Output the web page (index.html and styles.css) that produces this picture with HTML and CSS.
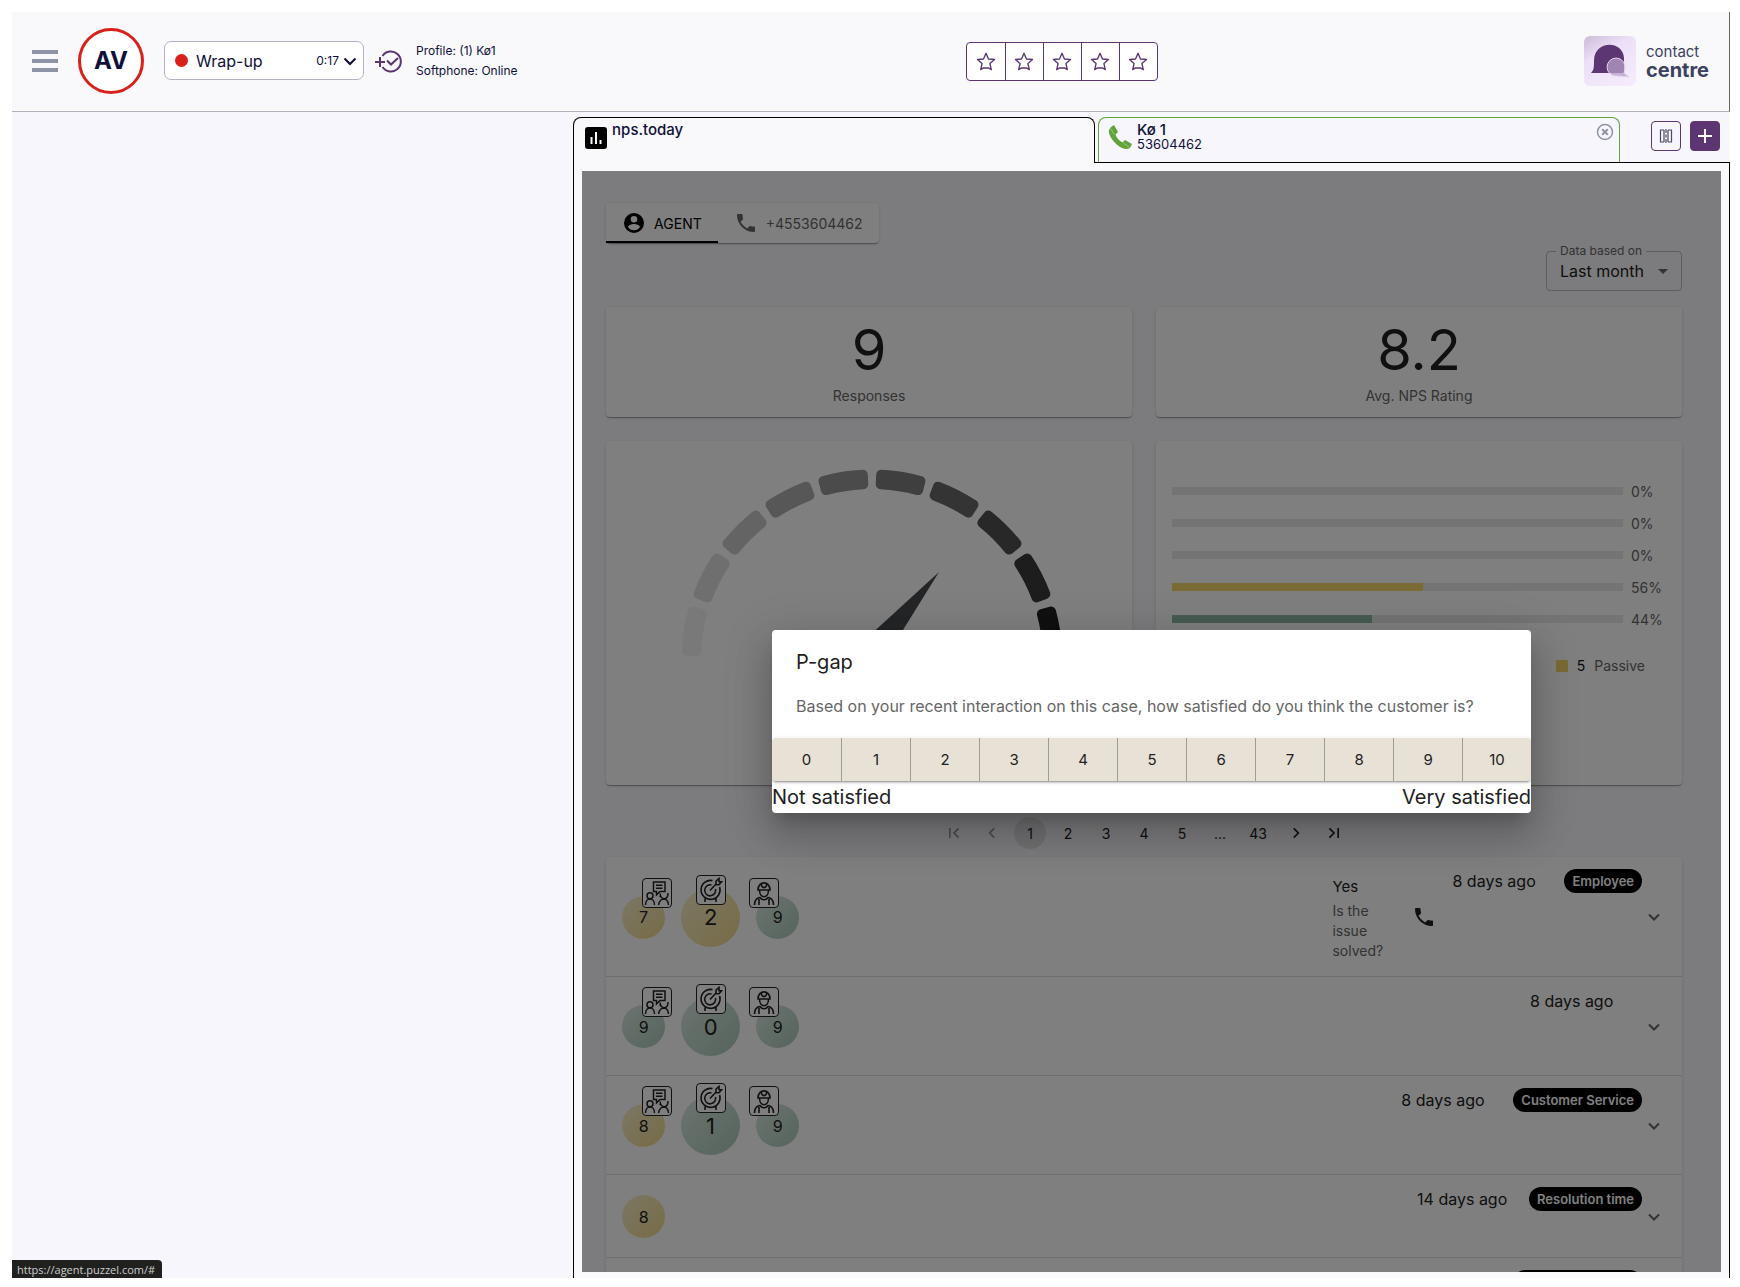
FILE: index.html
```html
<!DOCTYPE html>
<html lang="en">
<head>
<meta charset="utf-8">
<title>Contact Centre</title>
<link rel="stylesheet" href="styles.css">
</head>
<body>
<svg class="defs" aria-hidden="true">
  <symbol id="star" viewBox="0 0 24 24"><path d="M12 2.500l2.700 6.200 6.600.600-5 4.400 1.500 6.600-3-1.800h-5.600l-3 1.800 1.500-6.600-5-4.400 6.600-.600z" fill="none" stroke="currentColor" stroke-width="1.500" stroke-linejoin="round"/></symbol>
  <symbol id="phone" viewBox="0 0 24 24"><path d="M6.600 10.800c1.400 2.800 3.800 5.100 6.600 6.600l2.200-2.200c.3-.3.7-.4 1-.2 1.100.4 2.300.6 3.600.6.6 0 1 .4 1 1V20c0 .6-.4 1-1 1C10.600 21 3 13.400 3 4c0-.6.4-1 1-1h3.500c.6 0 1 .4 1 1 0 1.300.2 2.500.6 3.600.1.300 0 .700-.2 1z" fill="currentColor"/></symbol>
  <symbol id="expand" viewBox="0 0 24 24"><path d="M7 9.500l5 5 5-5" fill="none" stroke="currentColor" stroke-width="2"/></symbol>
  <symbol id="talk" viewBox="0 0 28 28"><g fill="none" stroke="currentColor" stroke-width="1.500"><path d="M10.500 3h11.500v9.500h-5l-3.500 3.500v-3.500h-3zM13 6.200h6.500M13 9.200h6.500"/><circle cx="7" cy="16.800" r="3"/><path d="M2.500 26c0-8 9-8 9 0M17 14.500c1 7 8 7 8-.5M15.500 26c1-5 3-6 5.500-6s4 1 4.500 6M16.500 17l5 3.500"/></g></symbol>
  <symbol id="target" viewBox="0 0 28 28"><g fill="none" stroke="currentColor" stroke-width="1.600"><path d="M15.500 4.600A9.500 9.500 0 1 0 22.600 11M14.500 9a5.500 5.500 0 1 0 4 4M13 14.500l6-6.500V5l3-2.500v3.200h2.500L22 8.700h-3M8 22.500V26M19 22.500V26"/></g></symbol>
  <symbol id="worker" viewBox="0 0 28 28"><g fill="none" stroke="currentColor" stroke-width="1.600"><path d="M8 11C8 1.500 20 1.500 20 11zM11.500 4.500c-1 5.500 6 5.500 5 0M9.500 11c0 9 9 9 9 0M4.500 26c0-5 2-7 5.500-7.500 2 3 6 3 8 0 3.500.5 5.500 2.500 5.500 7.500M9 20v6M19 20v6"/></g></symbol>
</svg>
<div class="app">
  <header class="topbar">
    <button class="menu" aria-label="Menu"><span></span><span></span><span></span></button>
    <div class="avatar">AV</div>
    <button class="status"><span class="dot"></span><span class="status-name">Wrap-up</span><span class="timer">0:17</span>
      <svg width="14" height="10" viewBox="0 0 14 10"><path d="M1.500 2.500L7 8l5.500-5.500" fill="none" stroke="currentColor" stroke-width="2"/></svg></button>
    <button class="followup" aria-label="Add follow-up"><svg width="30" height="26" viewBox="0 0 30 26" fill="none" stroke="currentColor" stroke-width="2"><path d="M8.500 8A10 10 0 1 1 8.500 19M1 14h10M6 9v10M13 12.500l4 4 7-6.500"/></svg></button>
    <div class="profile"><div>Profile: (1) Kø1</div><div>Softphone: Online</div></div>
    <div class="rating">
      <button aria-label="1 star"><svg><use href="#star"/></svg></button><button aria-label="2 stars"><svg><use href="#star"/></svg></button><button aria-label="3 stars"><svg><use href="#star"/></svg></button><button aria-label="4 stars"><svg><use href="#star"/></svg></button><button aria-label="5 stars"><svg><use href="#star"/></svg></button>
    </div>
    <div class="brand">
      <svg width="52" height="50" viewBox="0 0 52 50">
        <defs><linearGradient id="tile" x1="0" y1="0" x2=".6" y2="1"><stop offset="0" stop-color="#cdbad9"/><stop offset=".4" stop-color="#ecdff7"/><stop offset="1" stop-color="#f4eafc"/></linearGradient></defs>
        <rect width="52" height="50" rx="6" fill="url(#tile)"/>
        <path d="M7 37c3-3 3-6 3-12C10 4 39 4 40 22v15z" fill="#5b3672"/>
        <path d="M40 37l5 4-12-1A9 9 0 1 1 41 32z" fill="#b79fca" fill-opacity=".75" stroke="#e3d5ee"/>
      </svg>
      <div class="brand-name"><span>contact</span><strong>centre</strong></div>
    </div>
  </header>
  <div class="body">
    <aside class="side"></aside>
    <main class="panel">
      <nav class="tabs">
        <a class="tab tab-active" href="#nps">
          <svg width="22" height="22" viewBox="0 0 22 22"><rect width="22" height="22" rx="3" fill="#000"/><path d="M6.500 10v7M11 5v12M15.500 13v4" stroke="#fff" stroke-width="2"/></svg>
          <span class="tab-text">nps.today</span></a>
        <div class="tabs-rest">
          <div class="tab tab-call">
            <svg width="25" height="25" viewBox="0 0 25 25"><path d="M3 2l3-2 4 7-2.500 2.500c1 3.500 4 6.500 7 8L17 15l7 4-2 4c-3 2-8 1-12-2.500C4 15.500-1 8 1.500 4z" fill="#62a43b"/><path d="M2.500 3.500l4 6M15.500 18l6 4.500" stroke="#a5cf8b" stroke-width=".8"/></svg>
            <a class="tab-text" href="#call">Kø 1<small>53604462</small></a>
            <button class="close" aria-label="Close tab"><svg width="18" height="18" viewBox="0 0 18 18" fill="none" stroke="currentColor" stroke-width="1.500"><circle cx="9" cy="9" r="7.500"/><path d="M6.200 6.200l5.600 5.600M11.800 6.200l-5.600 5.600" stroke-width="2"/></svg></button>
          </div>
          <div class="tab-tools">
            <button aria-label="Split view"><svg width="16" height="16" viewBox="0 0 16 16" fill="none" stroke="#4b4b63" stroke-width="1.200"><path d="M6 2H2.500v12H6M10 2h3.500v12H10M6 2v12M10 2v12M8 1v4M8 6.500v3M8 11v4"/></svg></button>
            <button class="add" aria-label="Add tab"><svg width="16" height="16" viewBox="0 0 16 16"><path d="M8 1v14M1 8h14" stroke="#fff" stroke-width="2"/></svg></button>
          </div>
        </div>
      </nav>
      <div class="content">
      <div class="frame">
        <div class="dash">
          <div class="switch card">
            <button class="on"><svg width="24" height="24" viewBox="0 0 24 24"><path fill-rule="evenodd" d="M12 2a10 10 0 1 0 0 20 10 10 0 0 0 0-20zm0 3a3.300 3.300 0 1 1 0 6.600A3.300 3.300 0 0 1 12 5zm0 14.200a7.200 7.200 0 0 1-6-3.200c0-2 4-3.100 6-3.100s6 1.100 6 3.100a7.200 7.200 0 0 1-6 3.200z" fill="currentColor"/></svg>AGENT</button>
            <button><svg width="24" height="24"><use href="#phone"/></svg>+4553604462</button>
          </div>
          <div class="filter">
            <label for="range">Data based on</label>
            <select id="range"><option>Last month</option></select>
            <svg class="arrow" width="10" height="5"><path d="M0 0h10L5 5z" fill="currentColor"/></svg>
          </div>
          <div class="grid">
            <section class="card stat"><b>9</b><span>Responses</span></section>
            <section class="card stat"><b>8.2</b><span>Avg. NPS Rating</span></section>
            <section class="card gauge">
              <svg width="390" height="210" viewBox="-195 -195 390 210">
                <defs><path id="seg" d="M-19.900-184.400A185.500 185.500 0 0 1 19.900-184.400L18.900-175A176 176 0 0 0-18.900-175z" stroke-width="10" stroke-linejoin="round"/></defs>
                <use href="#seg" transform="rotate(-81)" fill="#f2f2f2" stroke="#f2f2f2"/>
                <use href="#seg" transform="rotate(-63)" fill="#dedede" stroke="#dedede"/>
                <use href="#seg" transform="rotate(-45)" fill="#c8c8c8" stroke="#c8c8c8"/>
                <use href="#seg" transform="rotate(-27)" fill="#aeaeae" stroke="#aeaeae"/>
                <use href="#seg" transform="rotate(-9)" fill="#969696" stroke="#969696"/>
                <use href="#seg" transform="rotate(9)" fill="#7e7e7e" stroke="#7e7e7e"/>
                <use href="#seg" transform="rotate(27)" fill="#686868" stroke="#686868"/>
                <use href="#seg" transform="rotate(45)" fill="#505050" stroke="#505050"/>
                <use href="#seg" transform="rotate(63)" fill="#3a3a3a" stroke="#3a3a3a"/>
                <use href="#seg" transform="rotate(81)" fill="#202020" stroke="#202020"/>
                <path d="M67-88L-16-12 8 7z" fill="#464a4f"/>
              </svg>
            </section>
            <section class="card bars">
              <div class="bar"><div class="track"></div><span>0%</span></div>
              <div class="bar"><div class="track"></div><span>0%</span></div>
              <div class="bar"><div class="track"></div><span>0%</span></div>
              <div class="bar"><div class="track"><i class="yellow" style="width:55.6%"></i></div><span>56%</span></div>
              <div class="bar"><div class="track"><i class="green" style="width:44.4%"></i></div><span>44%</span></div>
              <div class="legend"><i></i><b>5</b><span>Passive</span></div>
            </section>
          </div>
          <nav class="pages">
            <button disabled aria-label="First page"><svg width="20" height="20" viewBox="0 0 24 24" fill="none" stroke="currentColor" stroke-width="2"><path d="M7 6v12M17.500 6.500L12 12l5.500 5.500"/></svg></button>
            <button disabled aria-label="Previous page"><svg width="20" height="20" viewBox="0 0 24 24" fill="none" stroke="currentColor" stroke-width="2"><path d="M14.700 6.500L9.200 12l5.500 5.500"/></svg></button>
            <button class="current">1</button><button>2</button><button>3</button><button>4</button><button>5</button><span>...</span><button>43</button>
            <button aria-label="Next page"><svg width="20" height="20" viewBox="0 0 24 24" fill="none" stroke="currentColor" stroke-width="2"><path d="M9.300 6.500l5.500 5.500-5.500 5.500"/></svg></button>
            <button aria-label="Last page"><svg width="20" height="20" viewBox="0 0 24 24" fill="none" stroke="currentColor" stroke-width="2"><path d="M17 6v12M6.500 6.500L12 12l-5.500 5.500"/></svg></button>
          </nav>
          <section class="card list">
            <article class="row">
              <div class="scores">
                <div class="score passive">7<span class="badge right"><svg><use href="#talk"/></svg></span></div>
                <div class="score big passive">2<span class="badge mid"><svg><use href="#target"/></svg></span></div>
                <div class="score good">9<span class="badge left"><svg><use href="#worker"/></svg></span></div>
              </div>
              <div class="answer"><b>Yes</b><span>Is the issue solved?</span></div>
              <svg class="call" width="24" height="24"><use href="#phone"/></svg>
              <div class="meta"><time>8 days ago</time><span class="chip">Employee</span></div>
              <button class="expand" aria-label="Expand"><svg width="24" height="24"><use href="#expand"/></svg></button>
            </article>
            <article class="row">
              <div class="scores">
                <div class="score good">9<span class="badge right"><svg><use href="#talk"/></svg></span></div>
                <div class="score big good">0<span class="badge mid"><svg><use href="#target"/></svg></span></div>
                <div class="score good">9<span class="badge left"><svg><use href="#worker"/></svg></span></div>
              </div>
              <div class="meta"><time>8 days ago</time></div>
              <button class="expand" aria-label="Expand"><svg width="24" height="24"><use href="#expand"/></svg></button>
            </article>
            <article class="row">
              <div class="scores">
                <div class="score passive">8<span class="badge right"><svg><use href="#talk"/></svg></span></div>
                <div class="score big good">1<span class="badge mid"><svg><use href="#target"/></svg></span></div>
                <div class="score good">9<span class="badge left"><svg><use href="#worker"/></svg></span></div>
              </div>
              <div class="meta"><time>8 days ago</time><span class="chip">Customer Service</span></div>
              <button class="expand" aria-label="Expand"><svg width="24" height="24"><use href="#expand"/></svg></button>
            </article>
            <article class="row">
              <div class="scores"><div class="score passive">8</div></div>
              <div class="meta"><time>14 days ago</time><span class="chip">Resolution time</span></div>
              <button class="expand" aria-label="Expand"><svg width="24" height="24"><use href="#expand"/></svg></button>
            </article>
            <article class="row">
              <div class="meta"><span class="chip chip-wide"></span></div>
              <button class="expand" aria-label="Expand"><svg width="24" height="24"><use href="#expand"/></svg></button>
            </article>
          </section>
        </div>
        <div class="overlay">
          <div class="dialog" role="dialog" aria-labelledby="dlg">
            <h2 id="dlg">P-gap</h2>
            <p>Based on your recent interaction on this case, how satisfied do you think the customer is?</p>
            <div class="scale"><button>0</button><button>1</button><button>2</button><button>3</button><button>4</button><button>5</button><button>6</button><button>7</button><button>8</button><button>9</button><button>10</button></div>
            <div class="ends"><span>Not satisfied</span><span>Very satisfied</span></div>
          </div>
        </div>
      </div>
      </div>
    </main>
  </div>
  <div class="link-hint">https://agent.puzzel.com/#</div>
</div>
</body>
</html>
```
FILE: styles.css
```css
* { box-sizing: border-box; }
body { margin: 0; background: #fff; font-family: "Inter", "Liberation Sans", sans-serif; color: #10103a; }
button { font: inherit; color: inherit; background: none; border: 0; padding: 0; margin: 0; }
a { color: inherit; text-decoration: none; }
svg { display: block; flex: none; }
.defs { position: absolute; width: 0; height: 0; }

.app { position: relative; height: 100vh; padding: 12px 10px 9px 12px; display: flex; flex-direction: column; }

.topbar { height: 100px; flex: none; display: flex; align-items: center; background: #f9f9fc; border-bottom: 1px solid #b1b1c3; border-right: 1px solid #666; padding: 0 20px; position: relative; }
.topbar > * { margin-bottom: 2px; }
.menu { width: 26px; display: grid; gap: 5px; margin-right: 20px; }
.menu span { height: 4px; background: #8e93a5; }
.avatar { width: 66px; height: 66px; border: 3px solid #d8211a; border-radius: 50%; display: grid; place-items: center; font-size: 24px; font-weight: 700; background: #fff; margin-right: 20px; }
.status { width: 200px; height: 39px; border: 1px solid #b1b1c3; border-radius: 7px; background: #fff; display: flex; align-items: center; padding: 0 6px 0 10px; margin-right: 10px; text-align: left; }
.dot { width: 13px; height: 13px; border-radius: 50%; background: #d8211a; margin-right: 8px; }
.status-name { flex: 1; font-size: 16px; }
.timer { font-size: 12px; margin-right: 4px; }
.followup { color: #5b3672; margin-right: 12px; }
.profile { font-size: 12px; line-height: 20px; }
.rating { position: absolute; left: 50%; top: 30px; margin-left: 95px; display: flex; border: 1px solid #5b3672; border-radius: 4px; background: #fff; color: #5b3672; }
.rating button { width: 38px; height: 37px; display: grid; place-items: center; }
.rating button + button { border-left: 1px solid #5b3672; }
.rating svg { width: 22px; height: 22px; }
.brand { margin-left: auto; display: flex; align-items: center; gap: 10px; }
.brand-name { display: grid; font-size: 15px; line-height: 18px; color: #3c4260; }
.brand-name strong { font-size: 20px; }

.body { flex: 1; min-height: 0; display: grid; grid-template-columns: minmax(0, 97fr) minmax(0, 200fr); background: #f6f6fc; }
.panel { display: flex; flex-direction: column; min-height: 0; padding-top: 5px; }
.tabs { flex: none; height: 46px; display: grid; grid-template-columns: 522fr 635fr; }
.tab { display: flex; padding: 5px 0 0 11px; gap: 5px; border: 1px solid #000; border-bottom: 0; border-radius: 8px 8px 0 0; font-size: 15px; line-height: 14px; font-weight: 500; }
.tab > svg { margin-top: 4px; }
.tab-active { background: #f9f9fc; }
.tab-text small { display: block; font-size: 13px; line-height: 15px; font-weight: 400; }
.tabs-rest { display: flex; border-bottom: 1px solid #000; padding: 0 10px 0 3px; }
.tab-call { flex: 0 1 522px; border-color: #62a43b; padding-left: 9px; gap: 4px; }
.tab-call > svg { margin-top: 2px; }
.close { margin: 0 5px auto auto; color: #8e93a5; }
.tab-tools { margin: 4px 0 0 auto; display: flex; gap: 9px; }
.tab-tools button { width: 30px; height: 30px; border: 1px solid #5b3672; border-radius: 4px; display: grid; place-items: center; }
.tab-tools .add { background: #5b3672; }

.content { flex: 1; min-height: 0; display: flex; padding: 8px 8px 6px; background: #f9f9fc; border: solid #000; border-width: 0 1px; }
.frame { flex: 1; min-width: 0; position: relative; overflow: hidden; background: #f8f8fc; }

.dash { padding: 32px 39px 0 24px; color: #212121; font-size: 14px; }
.card { background: #fff; border-radius: 4px; box-shadow: 0 2px 1px -1px rgba(0,0,0,.2), 0 1px 1px rgba(0,0,0,.14), 0 1px 3px rgba(0,0,0,.12); }
.switch { display: flex; width: max-content; height: 40px; color: #666; font-size: 14px; }
.switch button { display: flex; align-items: center; gap: 8px; padding: 0 16px; }
.switch .on { color: #000; box-shadow: inset 0 -2px #000; }
.filter { position: relative; width: 136px; margin: 8px 0 16px auto; }
.filter label { position: absolute; left: 10px; top: -8px; padding: 0 4px; background: #f8f8fc; font-size: 12px; line-height: 16px; color: #666; }
.filter select { display: block; appearance: none; width: 100%; height: 40px; border: 1px solid #bbb; border-radius: 4px; background: none; padding: 0 13px; font: 16px "Inter", sans-serif; color: #212121; }
.arrow { position: absolute; right: 14px; top: 18px; color: #666; }

.grid { display: grid; grid-template-columns: 1fr 1fr; gap: 24px; }
.stat { height: 110px; display: flex; flex-direction: column; align-items: center; padding-top: 10px; }
.stat b { font-size: 56px; line-height: 67px; font-weight: 400; }
.stat span { font-size: 14px; line-height: 24px; color: #666; }
.gauge { height: 344px; padding: 24px 0 0 6px; display: flex; justify-content: center; }
.bars { padding: 34px 16px 0; color: #666; font-size: 14px; }
.bar { height: 32px; display: flex; align-items: center; gap: 8px; }
.track { flex: 1; height: 8px; background: #e9e9e9; }
.track i { display: block; height: 8px; }
.yellow, .legend i { background: #f4d468; }
.green { background: #8eb8a4; }
.bar span { width: 35px; }
.legend { display: flex; justify-content: flex-end; align-items: center; gap: 9px; margin: 22px 21px 0 0; }
.legend i { width: 12px; height: 12px; border-radius: 1px; }
.legend b { font-size: 14px; font-weight: 400; color: #111; }

.pages { display: flex; justify-content: center; gap: 6px; margin: 32px 0 8px; }
.pages > * { width: 32px; height: 32px; display: grid; place-items: center; border-radius: 50%; font-size: 14px; color: #212121; }
.pages button:disabled { color: #999; }
.pages .current { background: #e2e2e6; }

.row { position: relative; display: flex; align-items: center; padding: 16px; padding-bottom: 15px; border-bottom: 1px solid #ddd; min-height: 83px; }
.scores { display: flex; align-items: center; gap: 16px; padding: 4px 0; margin-right: auto; }
.score { position: relative; width: 43px; height: 43px; border-radius: 50%; display: grid; place-items: center; font-size: 16px; }
.big { width: 59px; height: 59px; font-size: 22px; }
.passive { background: linear-gradient(135deg, #f8efcc, #efd88c); }
.good { background: linear-gradient(135deg, #dbe8e1, #a9c9ba); }
.badge { position: absolute; width: 30px; height: 30px; border: 1px solid #222; border-radius: 4px; background: #fff; }
.badge svg { width: 28px; height: 28px; }
.right { left: 20px; top: -18px; }
.mid { left: 15px; top: -13px; }
.left { left: -7px; top: -18px; }
.answer { width: 56px; margin-right: 24px; }
.answer b { display: block; font-size: 15px; line-height: 28px; font-weight: 400; }
.answer span { display: block; font-size: 14px; line-height: 20px; color: #666; }
.call { margin-right: 16px; }
.meta { align-self: flex-start; display: flex; margin: -4px 0 0; font-size: 16px; line-height: 24px; }
.meta:first-child { margin-left: auto; }
.meta time { width: 112px; }
.chip { height: 24px; border-radius: 12px; background: #000; color: #fff; padding: 0 8px; font-size: 13px; font-weight: 600; }
.chip-wide { width: 129px; }
.expand { color: #666; }

.overlay { position: absolute; inset: 0; background: rgba(0,0,0,.5); display: grid; place-items: center; color: #212121; }
.dialog { width: 759px; max-width: 90%; background: #fff; border-radius: 4px; overflow: hidden; box-shadow: 0 11px 15px -7px rgba(0,0,0,.2), 0 24px 38px 3px rgba(0,0,0,.14), 0 9px 46px 8px rgba(0,0,0,.12); }
.dialog h2 { margin: 0; padding: 16px 24px; font-size: 20px; line-height: 32px; font-weight: 400; }
.dialog p { margin: 0 24px 20px; font-size: 16px; line-height: 24px; color: #666; }
.scale { display: grid; grid-template-columns: repeat(11, 1fr); background: #e8e2d6; border-radius: 4px; box-shadow: 0 3px 1px -2px rgba(0,0,0,.2), 0 2px 2px rgba(0,0,0,.14), 0 1px 5px rgba(0,0,0,.12); }
.scale button { height: 43px; font-size: 15px; }
.scale button + button { border-left: 1px solid #a19d92; }
.ends { display: flex; justify-content: space-between; font-size: 20px; line-height: 32px; }

.link-hint { position: absolute; left: 12px; bottom: 9px; height: 18px; padding: 0 7px 0 5px; border-radius: 0 4px 0 0; background: #20211f; color: #ccc; font: 11px/19px "Open Sans", sans-serif; }
```
